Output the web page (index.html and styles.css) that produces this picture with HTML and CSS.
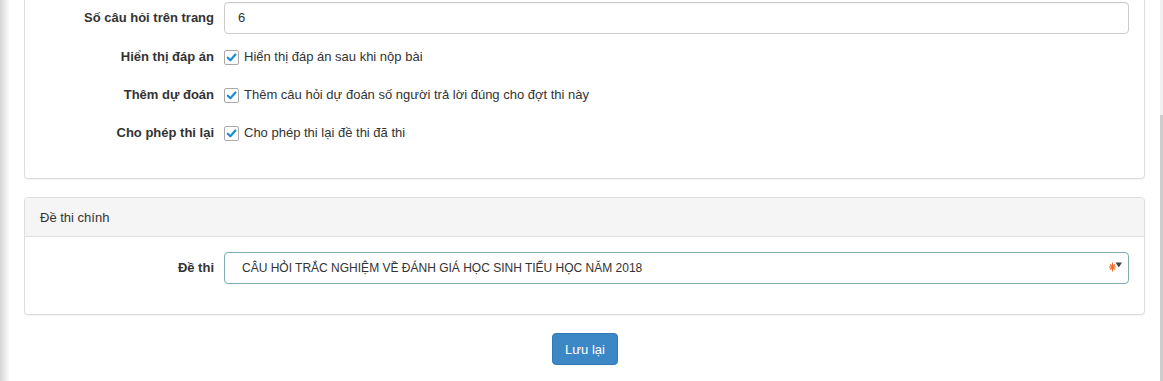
FILE: index.html
```html
<!DOCTYPE html>
<html lang="vi">
<head>
<meta charset="utf-8">
<title>Cấu hình đợt thi</title>
<link rel="stylesheet" href="styles.css">
</head>
<body>
<div class="page">
  <div class="shade"></div>
  <main class="main">
    <section class="panel panel-first">
      <div class="panel-body">
        <div class="form-row input-row">
          <label class="form-label">Số câu hỏi trên trang</label>
          <div class="form-field"><div class="input">6</div></div>
        </div>
        <div class="form-row check-row">
          <label class="form-label">Hiển thị đáp án</label>
          <div class="form-field check-field">
            <span class="checkbox"><svg viewBox="0 0 14 14" width="13" height="13"><path d="M3 7.2 L5.8 10 L11.2 3.8" fill="none" stroke="#1b8fcf" stroke-width="2.4" stroke-linecap="round" stroke-linejoin="round"/></svg></span>
            <span class="check-text">Hiển thị đáp án sau khi nộp bài</span>
          </div>
        </div>
        <div class="form-row check-row">
          <label class="form-label">Thêm dự đoán</label>
          <div class="form-field check-field">
            <span class="checkbox"><svg viewBox="0 0 14 14" width="13" height="13"><path d="M3 7.2 L5.8 10 L11.2 3.8" fill="none" stroke="#1b8fcf" stroke-width="2.4" stroke-linecap="round" stroke-linejoin="round"/></svg></span>
            <span class="check-text">Thêm câu hỏi dự đoán số người trả lời đúng cho đợt thi này</span>
          </div>
        </div>
        <div class="form-row check-row">
          <label class="form-label">Cho phép thi lại</label>
          <div class="form-field check-field">
            <span class="checkbox"><svg viewBox="0 0 14 14" width="13" height="13"><path d="M3 7.2 L5.8 10 L11.2 3.8" fill="none" stroke="#1b8fcf" stroke-width="2.4" stroke-linecap="round" stroke-linejoin="round"/></svg></span>
            <span class="check-text">Cho phép thi lại đề thi đã thi</span>
          </div>
        </div>
      </div>
    </section>

    <section class="panel">
      <div class="panel-heading">Đề thi chính</div>
      <div class="panel-body">
        <div class="form-row">
          <label class="form-label">Đề thi</label>
          <div class="form-field">
            <div class="select">
              <span class="select-text">CÂU HỎI TRẮC NGHIỆM VỀ ĐÁNH GIÁ HỌC SINH TIỂU HỌC NĂM 2018</span>
              <svg class="select-icon" viewBox="0 0 14 12" width="14" height="12">
                <g stroke="#f36a26" stroke-width="1.1" fill="none">
                  <line x1="3.5" y1="1.5" x2="3.5" y2="10.5"/>
                  <line x1="0" y1="6" x2="7" y2="6"/>
                  <line x1="1" y1="3.5" x2="6" y2="8.5"/>
                  <line x1="1" y1="8.5" x2="6" y2="3.5"/>
                </g>
                <path d="M6.5 1.5 H13 L9.75 6.5 Z" fill="#444"/>
              </svg>
            </div>
          </div>
        </div>
      </div>
    </section>

    <div class="actions">
      <button class="btn-primary" type="button">Lưu lại</button>
    </div>
  </main>
  <div class="scroll-strip"></div>
</div>
</body>
</html>
```
FILE: styles.css
```css
* { box-sizing: border-box; }
html, body { margin: 0; padding: 0; background: #fff; }
body {
  font-family: "Liberation Sans", Arial, Helvetica, sans-serif;
  font-size: 13px;
  color: #333;
  overflow: hidden;
  height: 381px;
}
.page {
  display: flex;
  height: 381px;
}
.shade {
  width: 9px;
  flex: none;
  background: linear-gradient(to right, #d4d4d4, #ececec 60%, #fbfbfb);
}
.main {
  width: 1151px;
  flex: none;
  padding: 0 15px;
}
.scroll-strip {
  width: 3px;
  flex: none;
  background: linear-gradient(to bottom, #f1f1f1 0, #f1f1f1 115px, #cdcdcd 115px, #cdcdcd 100%);
}
.panel {
  border: 1px solid #ddd;
  border-radius: 4px;
  background: #fff;
  box-shadow: 0 1px 1px rgba(0,0,0,0.05);
  margin-bottom: 18px;
}
.panel-first {
  margin-top: -14px;
}
.panel-heading {
  background: #f5f5f5;
  border-bottom: 1px solid #ddd;
  border-radius: 3px 3px 0 0;
  padding: 11px 15px 9px;
  line-height: 18px;
  height: 39px;
}
.panel-body {
  padding: 15px;
}
.form-row {
  display: flex;
  align-items: center;
  gap: 10px;
  margin-bottom: 10px;
}
.input-row { margin-bottom: 9px; }
.form-row:last-child { margin-bottom: 15px; }
.panel-first .form-row:last-child { margin-bottom: 16px; }
.form-label {
  width: 174px;
  flex: none;
  text-align: right;
  font-weight: bold;
  line-height: 18px;
}
.form-field {
  flex: 1;
  min-width: 0;
}
.input {
  height: 32px;
  border: 1px solid #ccc;
  border-radius: 4px;
  padding: 0 13px;
  line-height: 30px;
  box-shadow: inset 0 1px 1px rgba(0,0,0,0.04);
}
.check-row {
  height: 28px;
}
.check-field {
  display: flex;
  align-items: center;
  gap: 5px;
}
.checkbox {
  width: 15px;
  height: 15px;
  border: 1px solid #a9a9a9;
  border-radius: 2px;
  background: #fff;
  display: inline-flex;
  align-items: center;
  justify-content: center;
  flex: none;
}
.checkbox svg { display: block; }
.check-text { line-height: 18px; font-size: 13px; }
.select {
  height: 32px;
  border: 1px solid #7eacb3;
  border-radius: 4px;
  display: flex;
  align-items: center;
  padding: 0 5px 0 17px;
}
.select-text {
  flex: 1;
  font-size: 12px;
  color: #333;
  white-space: nowrap;
}
.select-icon { flex: none; display: block; margin-top: -3px; }
.actions {
  display: flex;
  justify-content: center;
}
.btn-primary {
  font-family: inherit;
  font-size: 13px;
  color: #fff;
  background: #3c88c7;
  border: 1px solid #3179b6;
  border-radius: 4px;
  width: 66px;
  height: 32px;
  padding: 0;
  margin-left: 1px;
}
```
